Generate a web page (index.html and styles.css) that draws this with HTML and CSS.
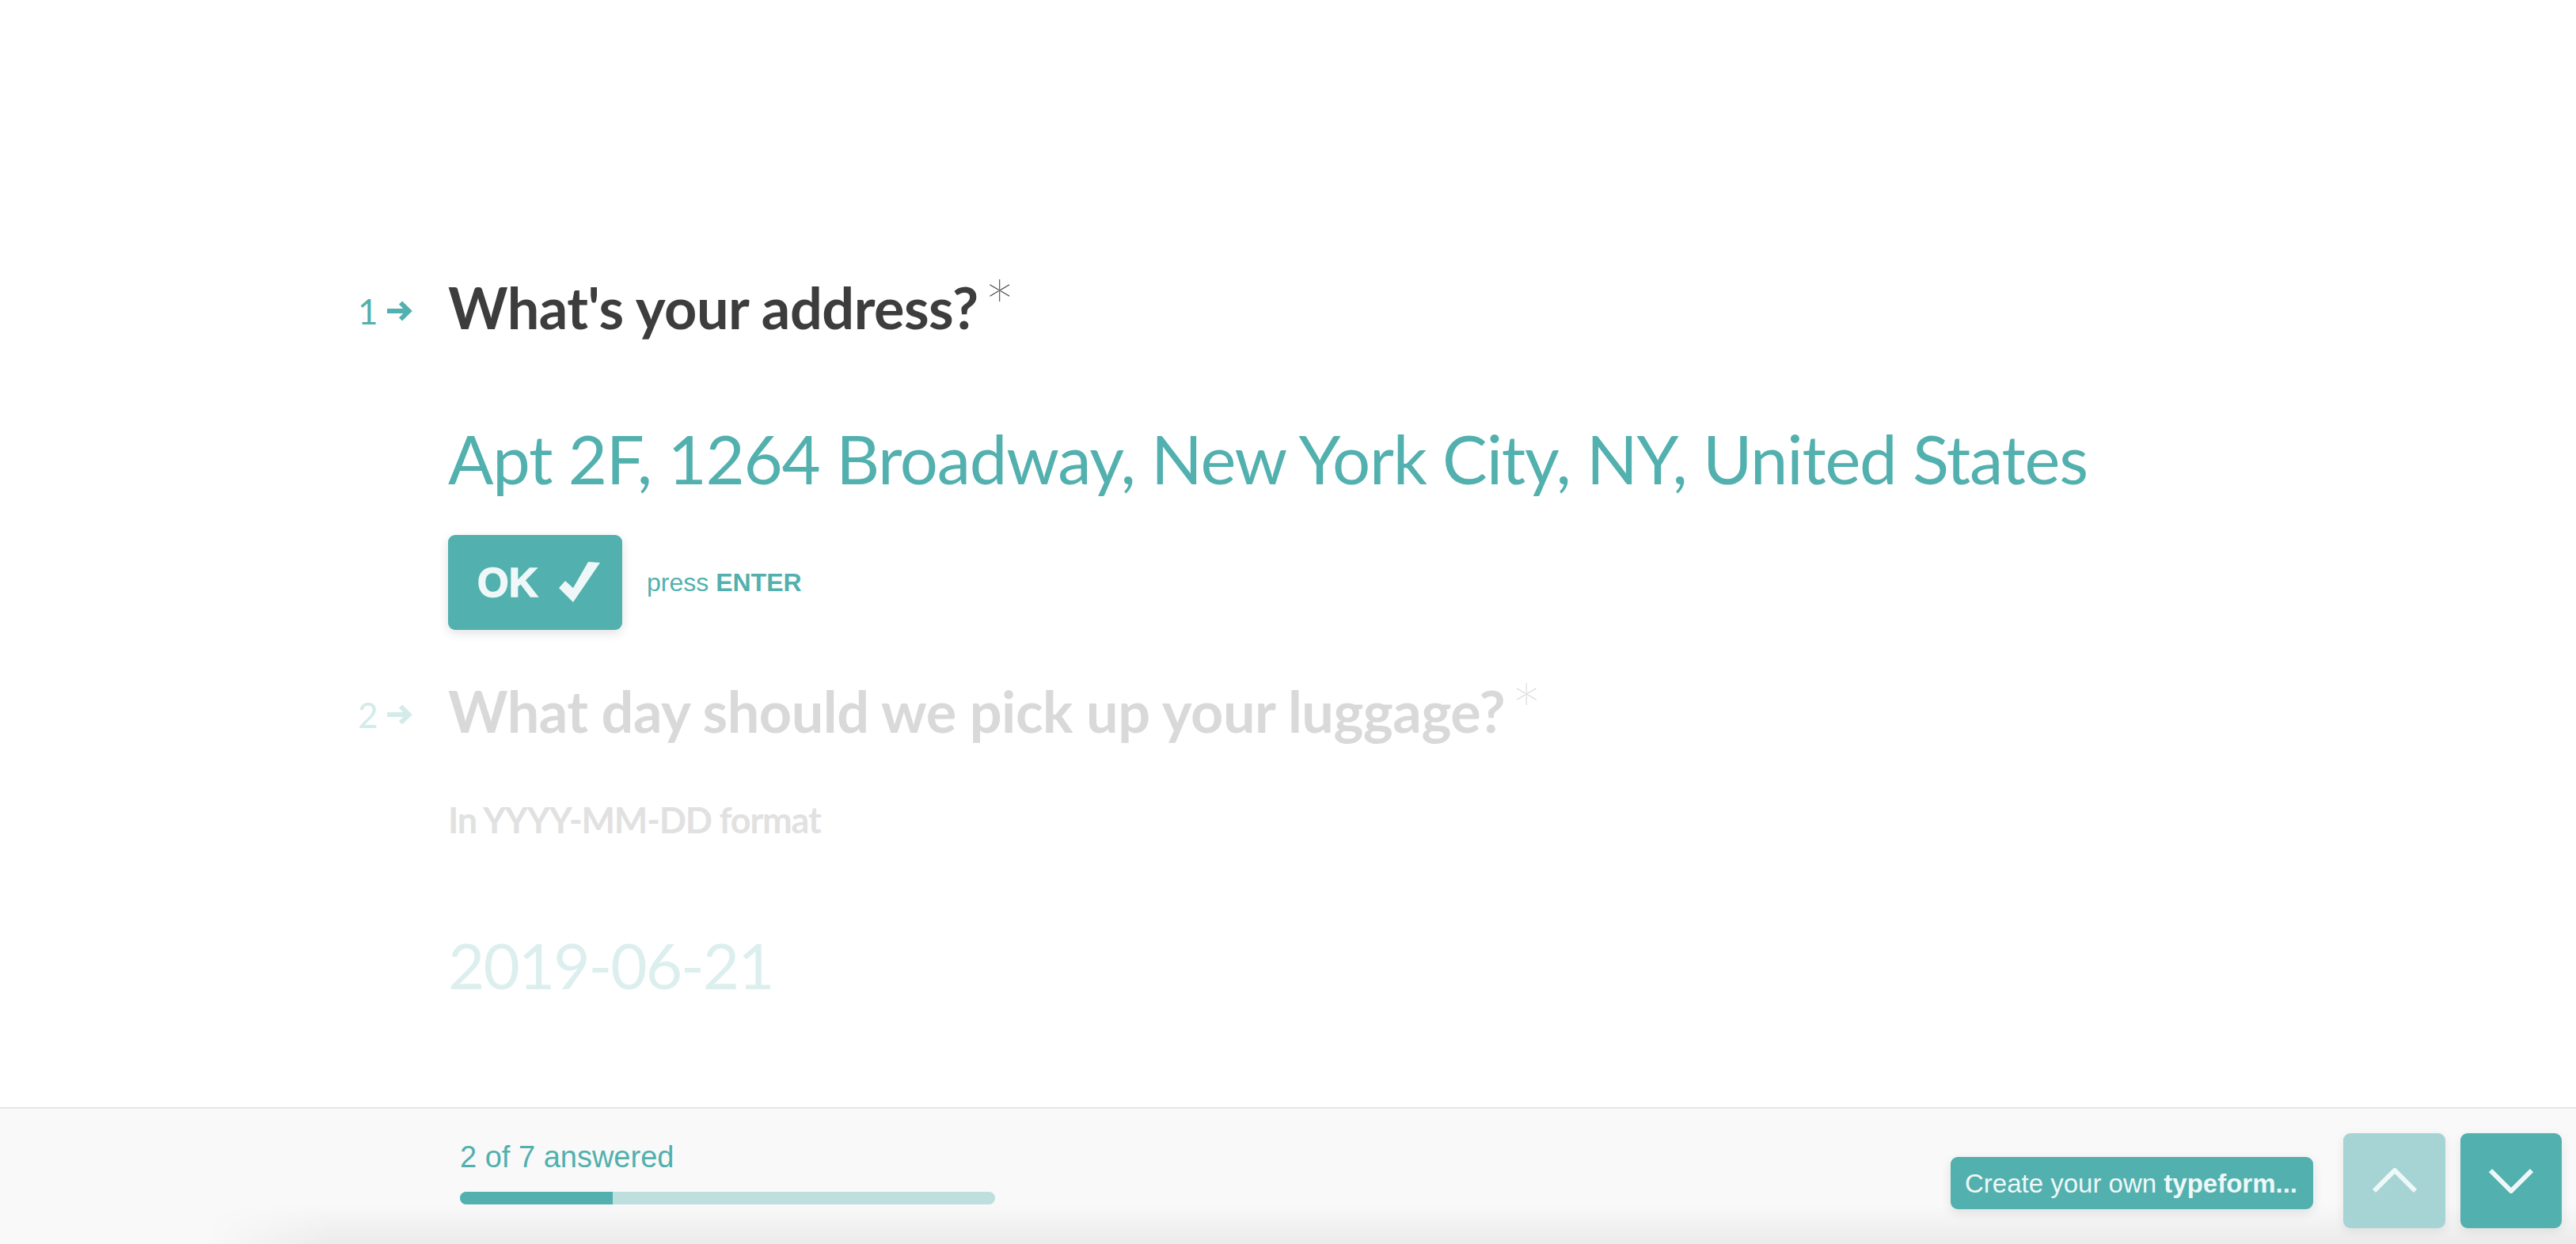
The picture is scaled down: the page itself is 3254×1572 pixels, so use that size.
FILE: index.html
```html
<!DOCTYPE html>
<html lang="en">
<head>
<meta charset="utf-8">
<title>Typeform</title>
<link rel="stylesheet" href="styles.css">
</head>
<body>
<div class="page">
  <main class="form">
    <div class="wrap">
      <section class="q">
        <div class="q-head">
          <div class="qnum"><span class="num">1</span><svg class="arrow" viewBox="0 0 32 26" width="32" height="26"><path d="M0 13H27M17 2.5L27.5 13L17 23.5" fill="none" stroke="currentColor" stroke-width="6"/></svg></div>
          <h1 class="qtitle">What's your address?<span class="req">*</span></h1>
        </div>
        <div class="q-body">
          <div class="answer">Apt 2F, 1264 Broadway, New York City, NY, United States</div>
          <div class="actions">
            <button class="ok"><span class="ok-label">OK</span><svg class="check" viewBox="0 0 52 52" width="52" height="52"><polygon points="0,33 8,24 18,33 37,0 52,1 18,51" fill="currentColor"/></svg></button>
            <span class="hint">press <b>ENTER</b></span>
          </div>
        </div>
      </section>
      <section class="q q-dim">
        <div class="q-head">
          <div class="qnum"><span class="num">2</span><svg class="arrow" viewBox="0 0 32 26" width="32" height="26"><path d="M0 13H27M17 2.5L27.5 13L17 23.5" fill="none" stroke="currentColor" stroke-width="6"/></svg></div>
          <h2 class="qtitle">What day should we pick up your luggage?<span class="req">*</span></h2>
        </div>
        <div class="q-body">
          <div class="sub">In YYYY-MM-DD format</div>
          <div class="date">2019-06-21</div>
        </div>
      </section>
    </div>
  </main>
  <footer class="footer">
    <div class="progress">
      <div class="progress-label">2 of 7 answered</div>
      <div class="bar"><div class="bar-fill" style="width:28.57%"></div></div>
    </div>
    <div class="nav">
      <a class="create">Create your own&nbsp;<b>typeform...</b></a>
      <button class="navbtn up"><svg viewBox="0 0 56 32" width="56" height="32"><path d="M2 29L28 3L54 29" fill="none" stroke="currentColor" stroke-width="6"/></svg></button>
      <button class="navbtn down"><svg viewBox="0 0 56 32" width="56" height="32"><path d="M2 3L28 29L54 3" fill="none" stroke="currentColor" stroke-width="6"/></svg></button>
    </div>
  </footer>
</div>
</body>
</html>
```
FILE: styles.css
```css
* { box-sizing: border-box; }
html, body { margin: 0; padding: 0; background: #fff; }
body { font-family: Lato, "Liberation Sans", sans-serif; }

.page {
  width: 3254px;
  height: 1572px;
  display: flex;
  flex-direction: column;
  overflow: hidden;
}

.form {
  flex: 1;
  overflow: hidden;
}

.wrap {
  width: 2350px;
  margin: 0 auto;
  padding-top: 352px;
}

.q-head {
  display: flex;
  align-items: flex-start;
}

.qnum {
  width: 114px;
  height: 72px;
  padding-top: 10px;
  display: flex;
  align-items: center;
  color: #52b0ae;
  flex-shrink: 0;
}

.num {
  font: 400 44px/44px Lato, sans-serif;
}

.arrow {
  margin-left: 11px;
  display: block;
}

.qtitle {
  margin: 0;
  font: 700 72px/72px Lato, sans-serif;
  color: #3d3d3d;
  letter-spacing: -0.5px;
  white-space: nowrap;
}

.req {
  display: inline-block;
  font: 200 100px/72px Lato, sans-serif;
  vertical-align: top;
  margin-left: 6px;
  letter-spacing: 0;
}

.q-body {
  margin-left: 114px;
}

.answer {
  margin-top: 113px;
  font: 400 85px/85px Lato, sans-serif;
  letter-spacing: -1.25px;
  color: #52b0ae;
  white-space: nowrap;
}

.actions {
  margin-top: 54px;
  display: flex;
  align-items: center;
  gap: 31px;
}

.ok {
  width: 220px;
  height: 120px;
  border: 0;
  border-radius: 9px;
  background: #52b0ae;
  color: #eef8f8;
  display: flex;
  align-items: center;
  padding: 0 0 0 37px;
  gap: 26px;
  box-shadow: 0 4px 14px rgba(0, 0, 0, 0.12);
}

.ok-label {
  font: 700 51px/1 "Liberation Sans", sans-serif;
  -webkit-text-stroke: 1.5px #eef8f8;
}

.check { display: block; }

.hint {
  font: 400 32px/1 "Liberation Sans", sans-serif;
  color: #52b0ae;
}

.hint b { font-weight: 700; }

.q-dim { margin-top: 66px; }
.q-dim .qnum { color: #d3ebea; }
.q-dim .qtitle { color: #d9d9d9; }

.sub {
  margin-top: 80px;
  font: 700 45px/45px Lato, sans-serif;
  letter-spacing: -1.2px;
  color: #e1e1e1;
}

.date {
  margin-top: 120px;
  font: 400 80px/80px Lato, sans-serif;
  letter-spacing: -2px;
  color: #dcefee;
}

.footer {
  position: relative;
  height: 173px;
  flex-shrink: 0;
  border-top: 2px solid #e6e6e6;
  background: #f9f9f9;
  display: flex;
  justify-content: space-between;
  align-items: flex-start;
  padding: 0 18px 0 581px;
}

.footer::after {
  content: "";
  position: absolute;
  left: 260px;
  right: 0;
  bottom: 0;
  height: 50px;
  background: linear-gradient(to bottom, rgba(0,0,0,0), rgba(0,0,0,0.055));
  -webkit-mask-image: linear-gradient(to right, transparent, #000 160px);
  mask-image: linear-gradient(to right, transparent, #000 160px);
  pointer-events: none;
}

.progress {
  padding-top: 42px;
  position: relative;
  z-index: 1;
}

.progress-label {
  font: 400 38px/38px "Liberation Sans", sans-serif;
  color: #52b0ae;
}

.bar {
  margin-top: 25px;
  width: 676px;
  height: 16px;
  border-radius: 8px;
  background: #bddfde;
  overflow: hidden;
}

.bar-fill {
  height: 100%;
  background: #52b0ae;
}

.nav {
  padding-top: 31px;
  display: flex;
  align-items: center;
  position: relative;
  z-index: 1;
}

.create {
  height: 66px;
  padding: 0 20px 0 18px;
  display: flex;
  align-items: center;
  border-radius: 9px;
  background: #52b0ae;
  color: #eef8f8;
  font: 400 33px/1 "Liberation Sans", sans-serif;
  white-space: nowrap;
  box-shadow: 0 4px 14px rgba(0, 0, 0, 0.1);
  margin-right: 38px;
  margin-top: 6px;
}

.create b { font-weight: 700; }

.navbtn {
  width: 129px;
  height: 120px;
  border: 0;
  border-radius: 9px;
  display: flex;
  align-items: center;
  justify-content: center;
  color: #eef8f8;
  padding: 0;
  box-shadow: 0 4px 14px rgba(0, 0, 0, 0.08);
}

.navbtn svg { display: block; }

.up { background: #a6d4d4; }
.down { background: #52b0ae; margin-left: 19px; width: 128px; }
```
